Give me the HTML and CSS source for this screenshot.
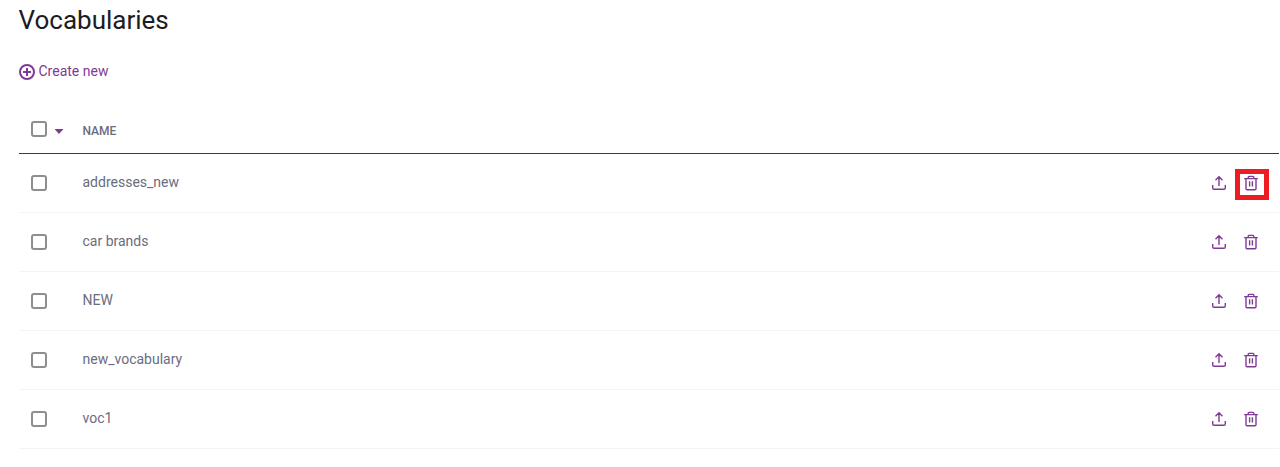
FILE: index.html
```html
<!DOCTYPE html>
<html lang="en">
<head>
  <meta charset="UTF-8">
  <meta name="viewport" content="width=device-width, initial-scale=1.0">
  <title>Vocabularies</title>
  <link rel="stylesheet" href="styles.css">
</head>
<body>
  <svg width="0" height="0" class="sprite">
    <symbol id="upload" viewBox="0 0 16 16">
      <path d="M8 11V2.2M4.500 5.200L8 1.700l3.500 3.500M1.700 10v3a1.300 1.300 0 0 0 1.300 1.300h10a1.300 1.300 0 0 0 1.300-1.300v-3" />
    </symbol>
    <symbol id="trash" viewBox="0 0 16 16">
      <path d="M1.200 3.600h13.600M5.200 3.500V2.200a.8.800 0 0 1 .8-.8h4a.8.800 0 0 1 .8.800v1.300M3 3.700v10a1 1 0 0 0 1 1h8a1 1 0 0 0 1-1v-10M6.600 6.300v5.200M9.400 6.300v5.200" />
    </symbol>
  </svg>
  <div class="container">
    <h1>Vocabularies</h1>
    <a class="create">
      <svg width="16" height="16" viewBox="0 0 16 16">
        <circle cx="8" cy="8" r="7" />
        <path d="M8 4v8M4 8h8" />
      </svg>
      <span>Create new</span>
    </a>
    <div class="table">
      <div class="row head">
        <span class="checkbox"></span>
        <span class="arrow"></span>
        <span class="name">NAME</span>
      </div>
      <div class="row">
        <span class="checkbox"></span>
        <span class="name">addresses_new</span>
        <svg class="icon"><use href="#upload" /></svg>
        <span class="marked"><svg class="icon"><use href="#trash" /></svg></span>
      </div>
      <div class="row">
        <span class="checkbox"></span>
        <span class="name">car brands</span>
        <svg class="icon"><use href="#upload" /></svg>
        <svg class="icon"><use href="#trash" /></svg>
      </div>
      <div class="row">
        <span class="checkbox"></span>
        <span class="name">NEW</span>
        <svg class="icon"><use href="#upload" /></svg>
        <svg class="icon"><use href="#trash" /></svg>
      </div>
      <div class="row">
        <span class="checkbox"></span>
        <span class="name">new_vocabulary</span>
        <svg class="icon"><use href="#upload" /></svg>
        <svg class="icon"><use href="#trash" /></svg>
      </div>
      <div class="row">
        <span class="checkbox"></span>
        <span class="name">voc1</span>
        <svg class="icon"><use href="#upload" /></svg>
        <svg class="icon"><use href="#trash" /></svg>
      </div>
    </div>
  </div>
</body>
</html>
```
FILE: styles.css
```css
* {
  box-sizing: border-box;
}
body {
  margin: 0;
  background: #fff;
  color: #6b6c7e;
  font-family: Roboto, sans-serif;
  font-size: 14px;
  overflow: hidden;
}
.sprite {
  display: none;
}
.container {
  padding: 4px 1px 0 19px;
}

h1 {
  margin: 0 0 0 -0.5px;
  color: #1c1c24;
  font-size: 26px;
  font-weight: 400;
  line-height: 32px;
}

.create {
  display: flex;
  gap: 3.5px;
  margin-top: 26px;
  height: 20px;
  line-height: 18px;
  color: #7f3a96;
}
.create svg {
  margin-top: 2px;
}
svg {
  fill: none;
  stroke: #7f3a96;
  stroke-width: 2;
}

.table {
  margin-top: 24px;
}
.row {
  display: flex;
  align-items: center;
  height: 59px;
  padding: 0 20px 0 12px;
  border-bottom: 1px solid #f3f3f3;
}
.head {
  height: 48px;
  border-color: #393a4a;
}
.checkbox {
  width: 16px;
  height: 16px;
  border: 2px solid #8e8e8e;
  border-radius: 3px;
}
.name {
  flex: 1;
  margin-left: 35.5px;
  line-height: 18px;
  padding-bottom: 2px;
}
.head .checkbox {
  margin-bottom: 1px;
}
.arrow {
  width: 9px;
  height: 5px;
  margin: 4px 0 0 7.5px;
  background: #7f3a96;
  clip-path: polygon(0 0, 100% 0, 50% 100%);
}
.head .name {
  margin-left: 19px;
  padding: 2px 0 0;
  font-size: 12px;
  font-weight: 500;
}

.icon {
  display: block;
  width: 16px;
  height: 16px;
  stroke-width: 1.4;
}
.icon + .icon {
  margin-left: 16px;
}
/* red frame around the delete button */
.marked {
  margin: 3px -10px 0 8px;
  padding: 1px 4px;
  width: 34px;
  height: 31px;
  border: 5px solid #ed1c24;
}
.marked .icon {
  margin-left: -1px;
}
```
